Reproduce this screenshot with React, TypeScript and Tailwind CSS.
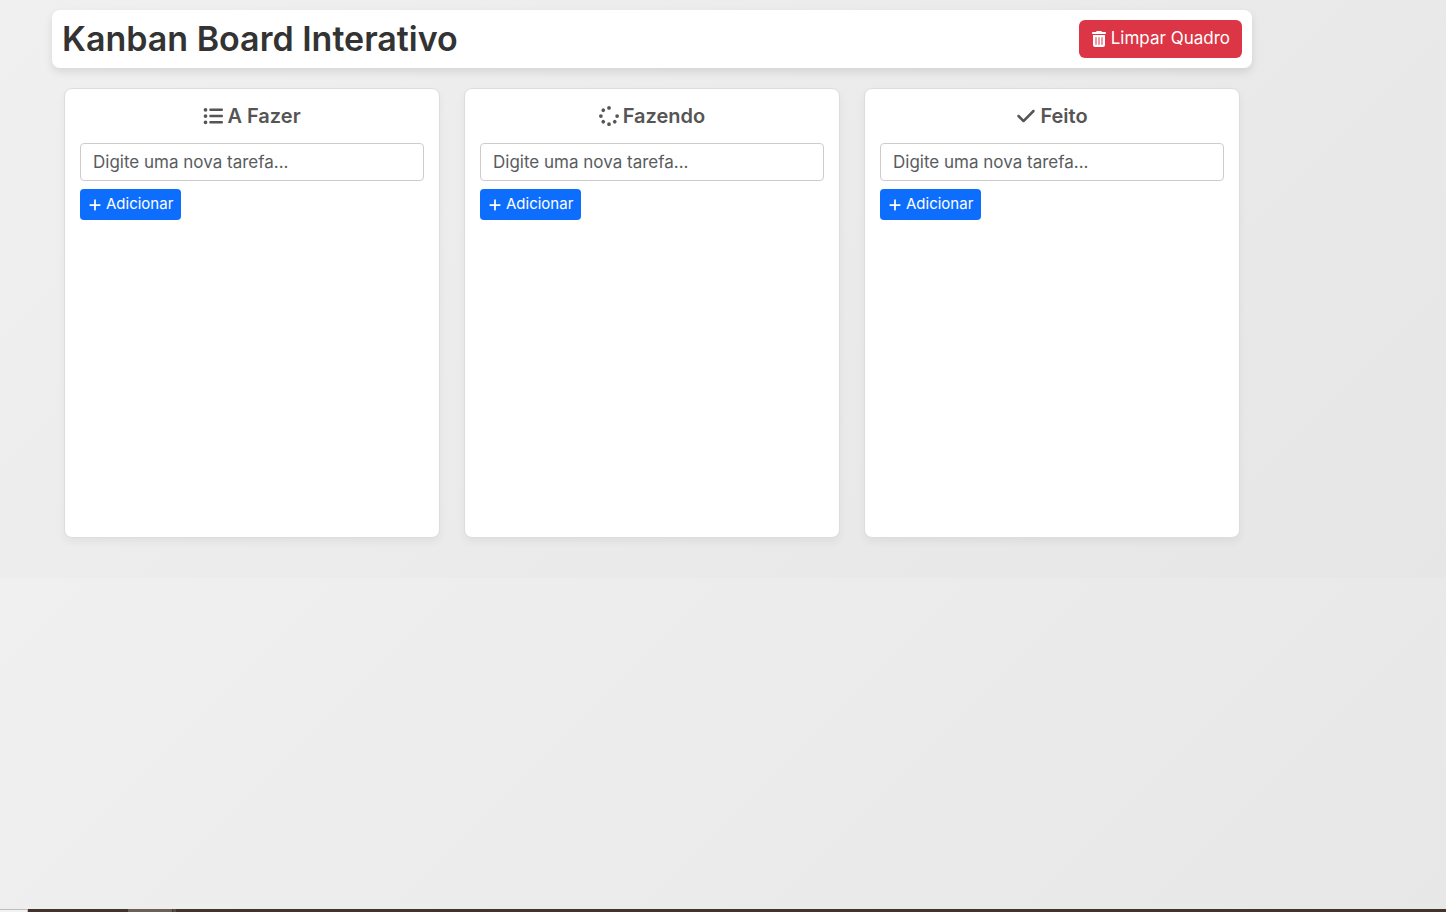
import { useState } from "react";
import type { FormEvent } from "react";
import type { IconType } from "react-icons";
import { FaCheck, FaListUl, FaPlus, FaSpinner, FaTrashCan } from "react-icons/fa6";

type Column = { id: string; title: string; Icon: IconType };

const columns: Column[] = [
  { id: "todo", title: "A Fazer", Icon: FaListUl },
  { id: "doing", title: "Fazendo", Icon: FaSpinner },
  { id: "done", title: "Feito", Icon: FaCheck },
];

function BoardColumn({
  column,
  tasks,
  onAdd,
}: {
  column: Column;
  tasks: string[];
  onAdd: (text: string) => void;
}) {
  const [text, setText] = useState("");
  const { id, title, Icon } = column;

  function submit(event: FormEvent) {
    event.preventDefault();
    if (text.trim()) {
      onAdd(text.trim());
      setText("");
    }
  }

  return (
    <section className="min-h-[450px] rounded-lg border border-[#dddddd] bg-white p-[15px] shadow-[0_4px_8px_rgba(0,0,0,0.05)]">
      <h2 className="mb-[15px] flex items-center justify-center gap-1 text-xl leading-6 font-semibold text-[#555555]">
        <Icon aria-hidden="true" />
        {title}
      </h2>
      <form onSubmit={submit}>
        <input
          id={`task-${id}`}
          aria-label={`Nova tarefa em ${title}`}
          type="text"
          value={text}
          onChange={(event) => setText(event.target.value)}
          placeholder="Digite uma nova tarefa..."
          className="block h-[38px] w-full rounded border border-[#cccccc] bg-white px-3 text-[17px] text-[#212529] placeholder:text-[#595c5f]"
        />
        <button
          type="submit"
          className="mt-2 flex h-[31px] items-center gap-1 rounded bg-[#0d6efd] px-2 text-[15px] text-white"
        >
          <FaPlus aria-hidden="true" className="size-[14px]" />
          Adicionar
        </button>
      </form>
      <ul className="flex flex-col gap-2 pt-3">
        {tasks.map((task, index) => (
          <li key={index} className="rounded border border-[#dddddd] p-2 text-sm">
            {task}
          </li>
        ))}
      </ul>
    </section>
  );
}

export default function App() {
  const [tasks, setTasks] = useState<Record<string, string[]>>({});

  return (
    <div className="flex min-h-screen flex-col font-[Inter,sans-serif]">
      <main className="flex-1 bg-[linear-gradient(135deg,#f0f0f0,#e6e6e6)] bg-[length:100%_578px] bg-repeat-y pt-[10px] pl-[52px]">
        <div className="w-full max-w-[1200px]">
          <header className="flex items-center justify-between rounded-lg bg-white p-[10px] shadow-[0_4px_8px_rgba(0,0,0,0.1)]">
            <h1 className="text-[34px] leading-[38px] font-semibold text-[#333333]">
              Kanban Board Interativo
            </h1>
            <button
              type="button"
              onClick={() => setTasks({})}
              className="flex h-[38px] items-center gap-1 rounded-md bg-[#dc3545] px-3 text-[17px] text-white"
            >
              <FaTrashCan aria-hidden="true" className="size-4" />
              Limpar Quadro
            </button>
          </header>
          <div className="grid grid-cols-3 gap-6 px-3 pt-5">
            {columns.map((column) => (
              <BoardColumn
                key={column.id}
                column={column}
                tasks={tasks[column.id] ?? []}
                onAdd={(text) =>
                  setTasks((all) => ({ ...all, [column.id]: [...(all[column.id] ?? []), text] }))
                }
              />
            ))}
          </div>
        </div>
      </main>
      <footer className="flex h-[3px] bg-[#42332d]">
        <div className="w-7 border-t border-r border-[#bcbcbc] bg-[#f3f3f3]" />
        <div className="ml-[100px] w-11 bg-[#6b6159]" />
        <div className="ml-px w-[3px] bg-[#574d47]" />
      </footer>
    </div>
  );
}
